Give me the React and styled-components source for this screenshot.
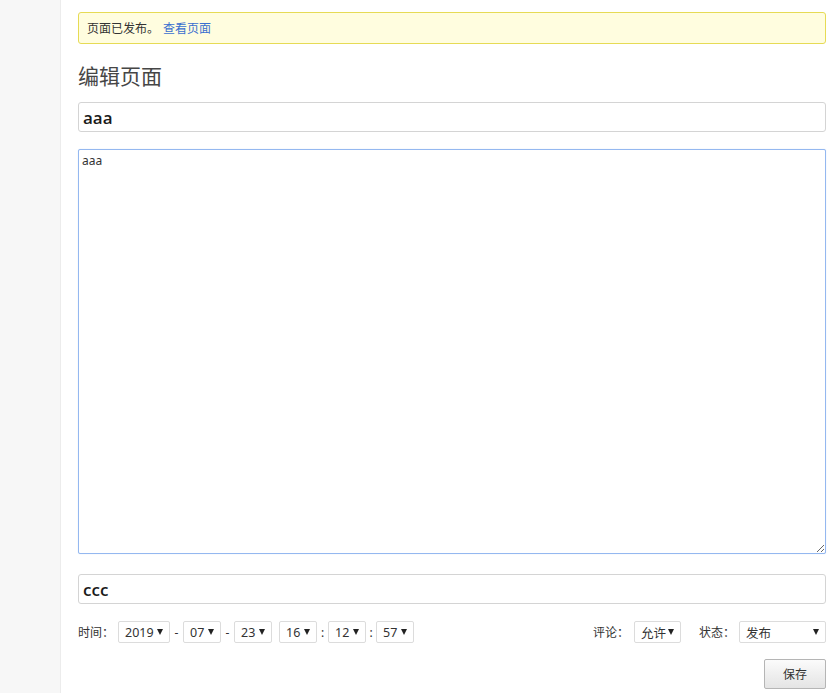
import React from "react";
import styled, { createGlobalStyle } from "styled-components";

const Global = createGlobalStyle`
  html, body { margin: 0; padding: 0; background: #fff; }
  body { font-family: "Noto Sans", "Noto Sans CJK SC", sans-serif; color: #333; }
  * { box-sizing: border-box; }
`;

const Layout = styled.div`
  display: flex;
  min-height: 693px;
`;

const Sidebar = styled.aside`
  width: 61px;
  flex: none;
  background: #f7f7f7;
  border-right: 1px solid #ececec;
`;

const Main = styled.main`
  flex: 1;
  padding: 12px 12px 0 17px;
  display: flex;
  flex-direction: column;
`;

const Notice = styled.div`
  height: 32px;
  border: 1px solid #e6db55;
  background: #fffddf;
  border-radius: 3px;
  display: flex;
  align-items: center;
  padding: 0 8px;
  font-size: 12px;
  color: #333;
  gap: 4px;
`;

const Link = styled.a`
  color: #3a6fcf;
  text-decoration: none;
`;

const Heading = styled.h2`
  margin: 19px 0 13px;
  font-size: 21px;
  font-weight: 400;
  line-height: 26px;
  color: #464646;
`;

const TextInput = styled.input`
  height: 30px;
  width: 100%;
  border: 1px solid #d4d4d4;
  border-radius: 3px;
  padding: 0 4px;
  font-family: "Open Sans", "Noto Sans CJK SC", sans-serif;
  font-size: 17px;
  font-weight: 600;
  color: #1a1a1a;
  outline: none;
  margin-top: ${(p) => p.$mt || 0}px;
`;

const Content = styled.textarea`
  margin-top: 17px;
  height: 405px;
  width: 100%;
  border: 1px solid #94b8f0;
  box-shadow: 0 0 1px #bcd3f5;
  border-radius: 2px;
  padding: 3px 3px;
  font-family: "Noto Sans", "Noto Sans CJK SC", sans-serif;
  font-size: 12px;
  line-height: 16px;
  color: #333;
  outline: none;
  resize: vertical;
`;

const MetaRow = styled.div`
  margin-top: 17px;
  height: 22px;
  display: flex;
  align-items: center;
  font-size: 12px;
`;

const Group = styled.div`
  display: flex;
  align-items: center;
`;

const Spacer = styled.div`
  flex: 1;
`;

const Label = styled.span`
  color: #333;
  margin-right: ${(p) => p.$mr}px;
  margin-left: ${(p) => p.$ml || 0}px;
`;

const Sep = styled.span`
  width: ${(p) => p.$w}px;
  text-align: center;
  color: #333;
`;

const Select = styled.div`
  height: 22px;
  width: ${(p) => p.$w}px;
  border: 1px solid #dcdcdc;
  border-radius: 2px;
  background: #fff;
  display: flex;
  align-items: center;
  justify-content: space-between;
  padding: 0 6px 0 6px;
  font-size: 12.5px;
  color: #333;
`;

const Arrow = styled.span`
  width: 0;
  height: 0;
  border-left: 3px solid transparent;
  border-right: 3px solid transparent;
  border-top: 6px solid #222;
  margin-top: -1px;
`;

const Actions = styled.div`
  margin-top: 16px;
  display: flex;
  justify-content: flex-end;
`;

const Button = styled.button`
  width: 62px;
  height: 30px;
  border: 1px solid #b5b5b5;
  border-radius: 2px;
  background: linear-gradient(#fbfbfb, #e4e4e4);
  font-family: "Noto Sans", "Noto Sans CJK SC", sans-serif;
  font-size: 12px;
  color: #333;
  padding: 0;
`;

const Sel = ({ w, children }) => (
  <Select $w={w}>
    <span>{children}</span>
    <Arrow />
  </Select>
);

export default function App() {
  return (
    <>
      <Global />
      <Layout>
        <Sidebar />
        <Main>
          <Notice>
            <span>页面已发布。</span>
            <Link href="#">查看页面</Link>
          </Notice>
          <Heading>编辑页面</Heading>
          <TextInput defaultValue="aaa" />
          <Content defaultValue="aaa" autoFocus />
          <TextInput defaultValue="ccc" $mt={20} />
          <MetaRow>
            <Group>
              <Label $mr={4}>时间：</Label>
              <Sel w={52}>2019</Sel>
              <Sep $w={13}>-</Sep>
              <Sel w={38}>07</Sel>
              <Sep $w={13}>-</Sep>
              <Sel w={38}>23</Sel>
              <Sep $w={7}></Sep>
              <Sel w={38}>16</Sel>
              <Sep $w={11}>:</Sep>
              <Sel w={38}>12</Sel>
              <Sep $w={10}>:</Sep>
              <Sel w={38}>57</Sel>
            </Group>
            <Spacer />
            <Group>
              <Label $mr={5}>评论：</Label>
              <Sel w={47}>允许</Sel>
              <Label $ml={18} $mr={4}>状态：</Label>
              <Sel w={87}>发布</Sel>
            </Group>
          </MetaRow>
          <Actions>
            <Button>保存</Button>
          </Actions>
        </Main>
      </Layout>
    </>
  );
}
